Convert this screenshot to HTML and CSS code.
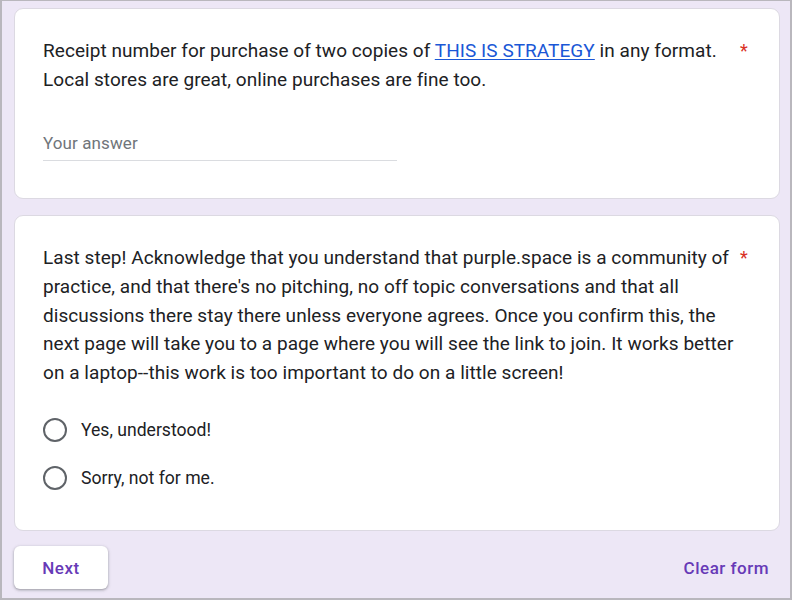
FILE: index.html
```html
<!DOCTYPE html>
<html>
<head>
<meta charset="utf-8">
<link rel="stylesheet" href="styles.css">
</head>
<body>
<div class="frame">
  <div class="card card-first">
    <div class="question">
      <div class="qtext">Receipt number for purchase of two copies of <a class="link" href="#">THIS IS STRATEGY</a> in any format. Local stores are great, online purchases are fine too.</div>
      <span class="req">*</span>
    </div>
    <div class="answer">Your answer</div>
  </div>
  <div class="card card-second">
    <div class="question">
      <div class="qtext">Last step! Acknowledge that you understand that purple.space is a community of practice, and that there's no pitching, no off topic conversations and that all discussions there stay there unless everyone agrees. Once you confirm this, the next page will take you to a page where you will see the link to join. It works better on a laptop--this work is too important to do on a little screen!</div>
      <span class="req">*</span>
    </div>
    <div class="options">
      <label class="option"><span class="radio"></span><span class="opt-label">Yes, understood!</span></label>
      <label class="option"><span class="radio"></span><span class="opt-label">Sorry, not for me.</span></label>
    </div>
  </div>
  <div class="actions">
    <button class="next">Next</button>
    <button class="clear">Clear form</button>
  </div>
</div>
</body>
</html>
```
FILE: styles.css
```css
* { box-sizing: border-box; }
html, body { margin: 0; padding: 0; }
body { font-family: Roboto, "Noto Sans", sans-serif; color: #202124; background: #fff; }
.frame {
  width: 792px;
  height: 600px;
  background: #ede7f6;
  border-top: 1px solid #b9b7bd;
  border-left: 2px solid #b9b7bd;
  border-right: 2px solid #b9b7bd;
  border-bottom: 2px solid #b9b7bd;
  padding: 7px 10px 0 12px;
  display: flex;
  flex-direction: column;
  gap: 16px;
}
.card {
  background: #fff;
  border: 1px solid #dcd9e2;
  border-radius: 9px;
  padding: 28px 28px 0 28px;
}
.card-first { height: 191px; }
.card-second { height: 316px; }
.question {
  display: flex;
  align-items: flex-start;
  gap: 4px;
}
.qtext {
  flex: 1;
  font-size: 19px;
  line-height: 28.8px;
  letter-spacing: 0.05px;
}
.link { color: #1a57d6; text-decoration: underline; text-underline-offset: 2px; }
.req { color: #d93025; font-size: 18px; line-height: 28.8px; width: 10px; margin-right: 1px; }
.answer {
  margin-top: 38px;
  width: 354px;
  font-size: 17px;
  color: #70757a;
  line-height: 20px;
  padding-bottom: 7px;
  border-bottom: 1px solid #dadce0;
  letter-spacing: 0.1px;
}
.options {
  margin-top: 30px;
  display: flex;
  flex-direction: column;
  gap: 24px;
}
.option {
  display: flex;
  align-items: center;
  gap: 14px;
  height: 24px;
}
.radio {
  width: 24px;
  height: 24px;
  border: 2px solid #5f6368;
  border-radius: 50%;
  flex: none;
}
.opt-label { font-size: 17.6px; color: #202124; }
.actions {
  display: flex;
  justify-content: space-between;
  align-items: center;
  margin-top: -1px;
}
.next {
  width: 94px;
  height: 43px;
  background: #fff;
  border: none;
  border-radius: 6px;
  box-shadow: 0 1px 2px rgba(60,64,67,0.3), 0 1px 3px 1px rgba(60,64,67,0.15);
  color: #673ab7;
  font-family: Roboto, sans-serif;
  font-weight: 500;
  font-size: 17px;
  letter-spacing: 0.5px;
  cursor: pointer;
}
.clear {
  background: none;
  border: none;
  color: #673ab7;
  font-family: Roboto, sans-serif;
  font-weight: 500;
  font-size: 17px;
  letter-spacing: 0.5px;
  padding: 0 11px 0 0;
  cursor: pointer;
}
```
